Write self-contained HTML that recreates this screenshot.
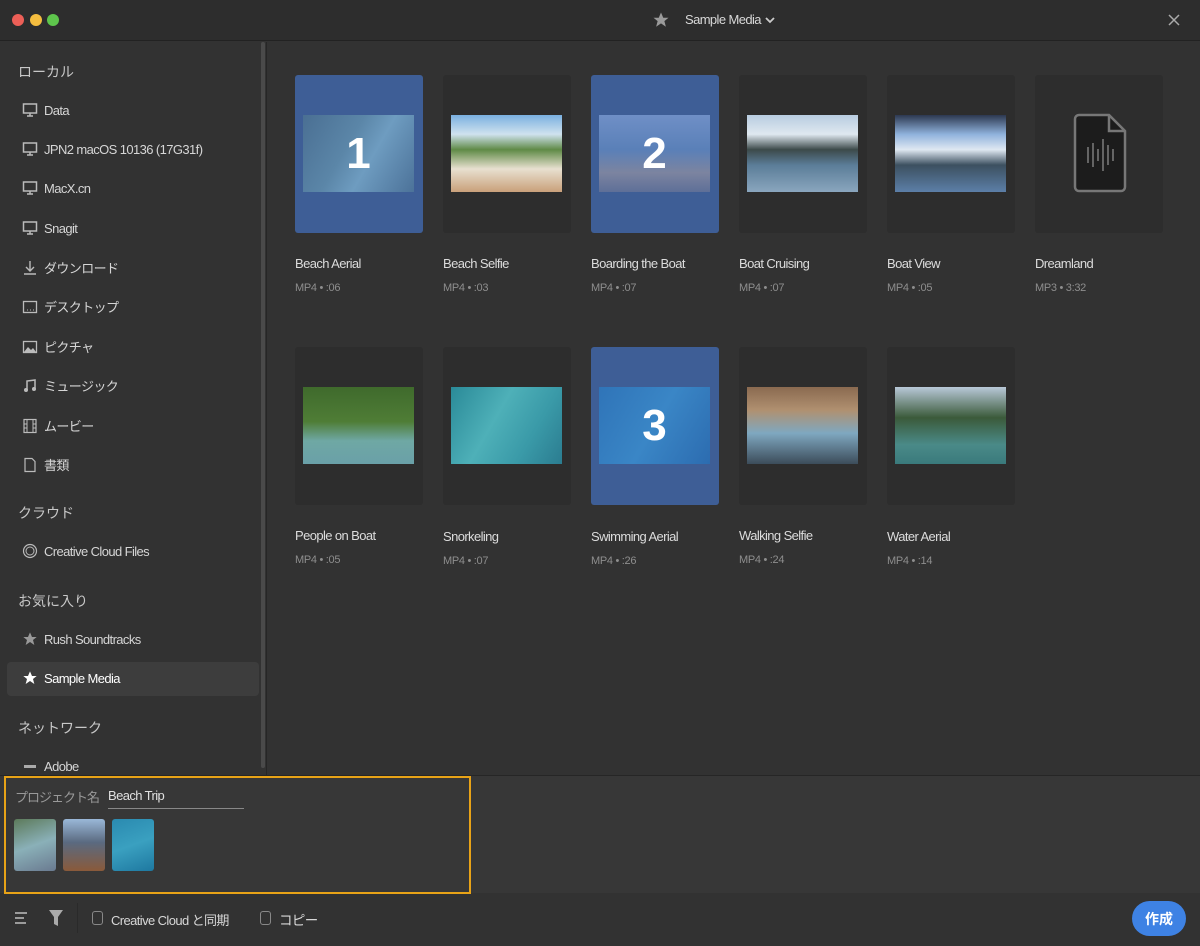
<!DOCTYPE html>
<html><head><meta charset="utf-8"><style>
*{margin:0;padding:0;box-sizing:border-box}
body{width:1200px;height:946px;background:#323232;font-family:"Liberation Sans","Noto Sans CJK JP",sans-serif;color:#d8d8d8;position:relative;overflow:hidden;letter-spacing:-0.6px}
.abs{position:absolute}
.tb{left:0;top:0;width:1200px;height:41px;background:#2d2d2d;border-bottom:1px solid #222}
.dot{width:12px;height:12px;border-radius:50%;top:14px}
.side{left:0;top:42px;width:262px;height:733px}
.hd{position:absolute;left:18px;font-size:14px;color:#c8c8c8;letter-spacing:0}
.it{position:absolute;left:22px;font-size:13px;color:#d6d6d6;display:flex;align-items:center;gap:6px;letter-spacing:-0.6px}
.it svg{width:16px;height:16px}
.card{position:absolute;width:128px;height:158px;background:#2d2d2d;border-radius:3px}
.card.sel{background:#3e5e96}
.th{position:absolute;left:8px;top:40px;width:111px;height:77px}
.num{position:absolute;left:0;top:0;width:100%;height:100%;display:flex;align-items:center;justify-content:center;font-size:44px;font-weight:bold;color:#fff;letter-spacing:0}
.t{position:absolute;font-size:13px;color:#dcdcdc;letter-spacing:-0.6px}
.m{position:absolute;font-size:11px;color:#8e8e8e;letter-spacing:-0.3px}
</style></head><body>
<div class="abs tb"></div>
<div class="abs dot" style="left:12px;background:#ec5f57"></div>
<div class="abs dot" style="left:30px;background:#f4bd3f"></div>
<div class="abs dot" style="left:47px;background:#5ec54c"></div>
<svg class="abs" style="left:652px;top:11px" width="18" height="18" viewBox="0 0 24 24"><path d="M12 2l3 7h7l-5.5 4.5 2 7.5L12 16.5 5.5 21l2-7.5L2 9h7z" fill="#9a9a9a"/></svg>
<div class="abs" style="left:685px;top:12px;font-size:13px;color:#d8d8d8">Sample Media</div>
<svg class="abs" style="left:764px;top:15px" width="12" height="10" viewBox="0 0 12 10"><path d="M2 3l4 4 4-4" stroke="#ccc" stroke-width="1.8" fill="none"/></svg>
<svg class="abs" style="left:1167px;top:13px" width="14" height="14" viewBox="0 0 14 14"><path d="M2 2l10 10M12 2L2 12" stroke="#aaa" stroke-width="1.5"/></svg>

<div class="abs side">
<div class="hd" style="top:20px">ローカル</div>
<div class="it" style="top:60px"><svg viewBox="0 0 16 16"><rect x="1.5" y="2" width="13" height="9" fill="none" stroke="#bbb" stroke-width="1.5"/><path d="M8 11v3M5 14h6" stroke="#bbb" stroke-width="1.5"/></svg>Data</div>
<div class="it" style="top:99px"><svg viewBox="0 0 16 16"><rect x="1.5" y="2" width="13" height="9" fill="none" stroke="#bbb" stroke-width="1.5"/><path d="M8 11v3M5 14h6" stroke="#bbb" stroke-width="1.5"/></svg>JPN2 macOS 10136 (17G31f)</div>
<div class="it" style="top:138px"><svg viewBox="0 0 16 16"><rect x="1.5" y="2" width="13" height="9" fill="none" stroke="#bbb" stroke-width="1.5"/><path d="M8 11v3M5 14h6" stroke="#bbb" stroke-width="1.5"/></svg>MacX.cn</div>
<div class="it" style="top:178px"><svg viewBox="0 0 16 16"><rect x="1.5" y="2" width="13" height="9" fill="none" stroke="#bbb" stroke-width="1.5"/><path d="M8 11v3M5 14h6" stroke="#bbb" stroke-width="1.5"/></svg>Snagit</div>
<div class="it" style="top:216px"><svg viewBox="0 0 16 16"><path d="M8 1v10M4 7l4 4 4-4M2 14h12" stroke="#bbb" stroke-width="1.4" fill="none"/></svg>ダウンロード</div>
<div class="it" style="top:255px"><svg viewBox="0 0 16 16"><rect x="1.5" y="2.5" width="13" height="11" fill="none" stroke="#bbb" stroke-width="1.3"/><path d="M5 11h1M8 11h1M11 11h1" stroke="#bbb"/></svg>デスクトップ</div>
<div class="it" style="top:295px"><svg viewBox="0 0 16 16"><rect x="1.5" y="2.5" width="13" height="11" fill="none" stroke="#bbb" stroke-width="1.3"/><path d="M2 13l4-5 3 3 2-2 3 4z" fill="#bbb"/></svg>ピクチャ</div>
<div class="it" style="top:334px"><svg viewBox="0 0 16 16"><path d="M5 12V3l8-1v9" stroke="#bbb" stroke-width="1.5" fill="none"/><circle cx="4" cy="12" r="2" fill="#bbb"/><circle cx="12" cy="11" r="2" fill="#bbb"/></svg>ミュージック</div>
<div class="it" style="top:374px"><svg viewBox="0 0 16 16"><rect x="2" y="1.5" width="12" height="13" fill="none" stroke="#bbb" stroke-width="1.2"/><path d="M5 2v12M11 2v12M2 6h3M2 10h3M11 6h3M11 10h3" stroke="#bbb"/></svg>ムービー</div>
<div class="it" style="top:413px"><svg viewBox="0 0 16 16"><path d="M3 1.5h7l3 3v10H3z" fill="none" stroke="#bbb" stroke-width="1.2"/></svg>書類</div>
<div class="hd" style="top:461px">クラウド</div>
<div class="it" style="top:501px"><svg viewBox="0 0 16 16"><circle cx="8" cy="8" r="6.5" fill="none" stroke="#bbb" stroke-width="1.2"/><circle cx="8" cy="8" r="4" fill="none" stroke="#bbb" stroke-width="1"/></svg>Creative Cloud Files</div>
<div class="hd" style="top:549px">お気に入り</div>
<div class="it" style="top:589px"><svg viewBox="0 0 24 24"><path d="M12 2l3 7h7l-5.5 4.5 2 7.5L12 16.5 5.5 21l2-7.5L2 9h7z" fill="#999"/></svg>Rush Soundtracks</div>
<div class="abs" style="left:7px;top:620px;width:252px;height:34px;background:#3d3d3d;border-radius:4px"></div>
<div class="it" style="top:628px;color:#fff"><svg viewBox="0 0 24 24"><path d="M12 2l3 7h7l-5.5 4.5 2 7.5L12 16.5 5.5 21l2-7.5L2 9h7z" fill="#fff"/></svg>Sample Media</div>
<div class="hd" style="top:676px">ネットワーク</div>
<div class="it" style="top:716px"><svg viewBox="0 0 16 16"><rect x="2" y="7" width="12" height="3" fill="#aaa"/></svg>Adobe</div>
</div>
<div class="abs" style="left:261px;top:42px;width:4px;height:726px;background:#4a4a4a;border-radius:2px"></div>
<div class="abs" style="left:266px;top:42px;width:1px;height:733px;background:#262626"></div>

<div class="card sel" style="left:295px;top:75px"><div class="th" style="background:linear-gradient(120deg,#4a6f93 0%,#5b86a8 40%,#6e9cc0 60%,#4c7299 100%)"><div class="num">1</div></div></div>
<div class="card" style="left:443px;top:75px"><div class="th" style="background:linear-gradient(180deg,#7ab0e0 0%,#cfe2ee 25%,#5f8a46 45%,#e8e0d0 70%,#c9a07a 100%)"></div></div>
<div class="card sel" style="left:591px;top:75px"><div class="th" style="background:linear-gradient(180deg,#6f8fc6 0%,#5a80b8 45%,#7c84a0 75%,#5e6f98 100%)"><div class="num">2</div></div></div>
<div class="card" style="left:739px;top:75px"><div class="th" style="background:linear-gradient(180deg,#b8cce0 0%,#dfe8f0 25%,#3c4a4a 45%,#5b7d98 65%,#8aa6be 100%)"></div></div>
<div class="card" style="left:887px;top:75px"><div class="th" style="background:linear-gradient(180deg,#2c3850 0%,#8fb2dc 25%,#dfe8f2 45%,#3c5060 65%,#5c7fa8 100%)"></div></div>
<div class="card" style="left:1035px;top:75px"><svg class="abs" style="left:38px;top:38px" width="54" height="82" viewBox="0 0 54 82"><path d="M6 2h30l16 16v56a4 4 0 0 1-4 4H6a4 4 0 0 1-4-4V6a4 4 0 0 1 4-4z" fill="#1c1c1c" stroke="#777" stroke-width="2.5"/><path d="M36 2v16h16" fill="none" stroke="#777" stroke-width="2.5"/><path d="M15 34v16M20 30v24M25 36v12M30 26v32M35 32v20M40 36v12" stroke="#777" stroke-width="1.6"/></svg></div>
<div class="t" style="left:295px;top:256px">Beach Aerial</div><div class="m" style="left:295px;top:282px">MP4 • :06</div>
<div class="t" style="left:443px;top:256px">Beach Selfie</div><div class="m" style="left:443px;top:282px">MP4 • :03</div>
<div class="t" style="left:591px;top:256px">Boarding the Boat</div><div class="m" style="left:591px;top:282px">MP4 • :07</div>
<div class="t" style="left:739px;top:256px">Boat Cruising</div><div class="m" style="left:739px;top:282px">MP4 • :07</div>
<div class="t" style="left:887px;top:256px">Boat View</div><div class="m" style="left:887px;top:282px">MP4 • :05</div>
<div class="t" style="left:1035px;top:256px">Dreamland</div><div class="m" style="left:1035px;top:282px">MP3 • 3:32</div>

<div class="card" style="left:295px;top:347px"><div class="th" style="background:linear-gradient(180deg,#3f6a2c 0%,#4f7d36 45%,#6fa8a4 70%,#6aa0a8 100%)"></div></div>
<div class="card" style="left:443px;top:347px"><div class="th" style="background:linear-gradient(120deg,#2a8a98 0%,#4eb0b8 40%,#3a9aa8 70%,#2b7c90 100%)"></div></div>
<div class="card sel" style="left:591px;top:347px"><div class="th" style="background:linear-gradient(120deg,#2f74b8 0%,#3a86c6 50%,#2c6cb0 100%)"><div class="num">3</div></div></div>
<div class="card" style="left:739px;top:347px"><div class="th" style="background:linear-gradient(180deg,#8a6a50 0%,#b09070 30%,#7fa8c0 60%,#3c4c5a 100%)"></div></div>
<div class="card" style="left:887px;top:347px"><div class="th" style="background:linear-gradient(180deg,#b8c8d8 0%,#3b5a3a 40%,#4a8a88 75%,#3a7a7c 100%)"></div></div>
<div class="t" style="left:295px;top:528px">People on Boat</div><div class="m" style="left:295px;top:554px">MP4 • :05</div>
<div class="t" style="left:443px;top:529px">Snorkeling</div><div class="m" style="left:443px;top:555px">MP4 • :07</div>
<div class="t" style="left:591px;top:529px">Swimming Aerial</div><div class="m" style="left:591px;top:555px">MP4 • :26</div>
<div class="t" style="left:739px;top:528px">Walking Selfie</div><div class="m" style="left:739px;top:554px">MP4 • :24</div>
<div class="t" style="left:887px;top:529px">Water Aerial</div><div class="m" style="left:887px;top:555px">MP4 • :14</div>

<div class="abs" style="left:0;top:775px;width:1200px;height:118px;background:#373737;border-top:1px solid #262626"></div>
<div class="abs" style="left:4px;top:776px;width:467px;height:118px;border:2px solid #e8a317"></div>
<div class="abs" style="left:15px;top:787px;font-size:13px;color:#999;letter-spacing:-1px">プロジェクト名</div>
<div class="abs" style="left:108px;top:788px;font-size:13px;color:#e0e0e0">Beach Trip</div>
<div class="abs" style="left:108px;top:808px;width:136px;height:1px;background:#888"></div>
<div class="abs" style="left:14px;top:819px;width:42px;height:52px;border-radius:3px;background:linear-gradient(160deg,#5c7a5a,#8ab0b8 50%,#6a7a90)"></div>
<div class="abs" style="left:63px;top:819px;width:42px;height:52px;border-radius:3px;background:linear-gradient(180deg,#9ab8d8,#5a6a80 45%,#8a5a3a)"></div>
<div class="abs" style="left:112px;top:819px;width:42px;height:52px;border-radius:3px;background:linear-gradient(160deg,#2a8ab0,#3aa0c0 50%,#1e78a0)"></div>

<svg class="abs" style="left:14px;top:911px" width="14" height="14" viewBox="0 0 14 14"><path d="M1 2h12M1 7h9M1 12h11" stroke="#aaa" stroke-width="1.8"/></svg>
<svg class="abs" style="left:48px;top:909px" width="16" height="18" viewBox="0 0 16 18"><path d="M1 1h14L10 8v9L6 15V8z" fill="#aaa"/></svg>
<div class="abs" style="left:77px;top:903px;width:1px;height:30px;background:#2a2a2a"></div>
<div class="abs" style="left:92px;top:911px;width:11px;height:14px;border:1.5px solid #888;border-radius:3px"></div>
<div class="abs" style="left:111px;top:910px;font-size:13px;color:#d8d8d8">Creative Cloud と同期</div>
<div class="abs" style="left:260px;top:911px;width:11px;height:14px;border:1.5px solid #888;border-radius:3px"></div>
<div class="abs" style="left:279px;top:909px;font-size:13.5px;color:#d8d8d8">コピー</div>
<div class="abs" style="left:1132px;top:901px;width:54px;height:35px;border-radius:18px;background:#3e82e4;color:#fff;font-size:14px;font-weight:bold;display:flex;align-items:center;justify-content:center;letter-spacing:0">作成</div>
</body></html>
